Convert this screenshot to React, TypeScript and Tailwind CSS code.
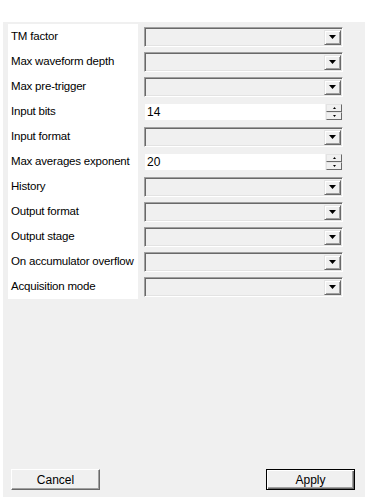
import React from "react";

type Field = { label: string; kind: "combo" | "spin"; value?: string };

const fields: Field[] = [
  { label: "TM factor", kind: "combo" },
  { label: "Max waveform depth", kind: "combo" },
  { label: "Max pre-trigger", kind: "combo" },
  { label: "Input bits", kind: "spin", value: "14" },
  { label: "Input format", kind: "combo" },
  { label: "Max averages exponent", kind: "spin", value: "20" },
  { label: "History", kind: "combo" },
  { label: "Output format", kind: "combo" },
  { label: "Output stage", kind: "combo" },
  { label: "On accumulator overflow", kind: "combo" },
  { label: "Acquisition mode", kind: "combo" },
];

const Combo: React.FC = () => (
  <div className="h-[20px] w-[199px] border border-t-[#a0a0a0] border-l-[#a0a0a0] border-b-white border-r-white bg-[#f0f0f0] shadow-[inset_1px_1px_0_#696969,inset_-1px_-1px_0_#e3e3e3] flex justify-end items-stretch pt-[2px] pl-[2px] pr-[1px] pb-[1px]">
    <div className="w-[17px] border border-t-[#e3e3e3] border-l-[#e3e3e3] border-b-[#696969] border-r-[#696969] bg-[#f0f0f0] shadow-[inset_1px_1px_0_#ffffff,inset_-1px_-1px_0_#a0a0a0] flex items-center justify-center">
      <svg width="7" height="4" viewBox="0 0 7 4">
        <path d="M0 0H7L3.5 4Z" fill="#000" />
      </svg>
    </div>
  </div>
);

const SpinButton: React.FC<{ up?: boolean }> = ({ up }) => (
  <div className="h-[8px] w-[16px] border border-t-[#e3e3e3] border-l-[#e3e3e3] border-b-[#696969] border-r-[#696969] bg-[#f0f0f0] flex items-center justify-center">
    <svg width="3" height="2" viewBox="0 0 3 2">
      <path d={up ? "M0 2H3L1.5 0Z" : "M0 0H3L1.5 2Z"} fill="#000" />
    </svg>
  </div>
);

const Spin: React.FC<{ value: string }> = ({ value }) => (
  <div className="h-[20px] w-[199px] flex items-center pl-[1px]">
    <div className="h-[16px] flex-1 bg-white pl-[2px] flex items-center text-[12px] text-black">
      {value}
    </div>
    <div className="flex flex-col w-[16px] ml-[1px] mr-[1px]">
      <SpinButton up />
      <SpinButton />
    </div>
  </div>
);

const WinButton: React.FC<{ label: string; primary?: boolean }> = ({ label, primary }) => (
  <div
    className={`h-[21px] w-[89px] flex items-center justify-center text-[12px] text-black bg-[#f0f0f0] ${
      primary
        ? "border border-black shadow-[inset_1px_1px_0_#ffffff,inset_-1px_-1px_0_#696969,inset_-2px_-2px_0_#a0a0a0]"
        : "border border-t-white border-l-white border-b-[#696969] border-r-[#696969] shadow-[inset_-1px_-1px_0_#a0a0a0]"
    }`}
  >
    {label}
  </div>
);

export default function App() {
  return (
    <div
      className="w-[368px] h-[501px] bg-white pt-[22px] pl-[3px]"
      style={{ fontFamily: '"Liberation Sans", Arial, sans-serif' }}
    >
      <div className="w-[362px] h-[475px] bg-[#f0f0f0] flex flex-col">
        <div className="flex pt-[2px] pl-[5px]">
          <div className="w-[130px] bg-white">
            {fields.map((f) => (
              <div
                key={f.label}
                className="h-[25px] flex items-center pl-[3px] text-[11.5px] tracking-[-0.2px] text-black whitespace-nowrap"
              >
                {f.label}
              </div>
            ))}
          </div>
          <div className="ml-[6px]">
            {fields.map((f) => (
              <div key={f.label} className="h-[25px] flex items-center">
                {f.kind === "combo" ? <Combo /> : <Spin value={f.value ?? ""} />}
              </div>
            ))}
          </div>
        </div>
        <div className="flex-1" />
        <div className="flex justify-between pl-[8px] pr-[10px] pb-[7px]">
          <WinButton label="Cancel" />
          <WinButton label="Apply" primary />
        </div>
      </div>
    </div>
  );
}
